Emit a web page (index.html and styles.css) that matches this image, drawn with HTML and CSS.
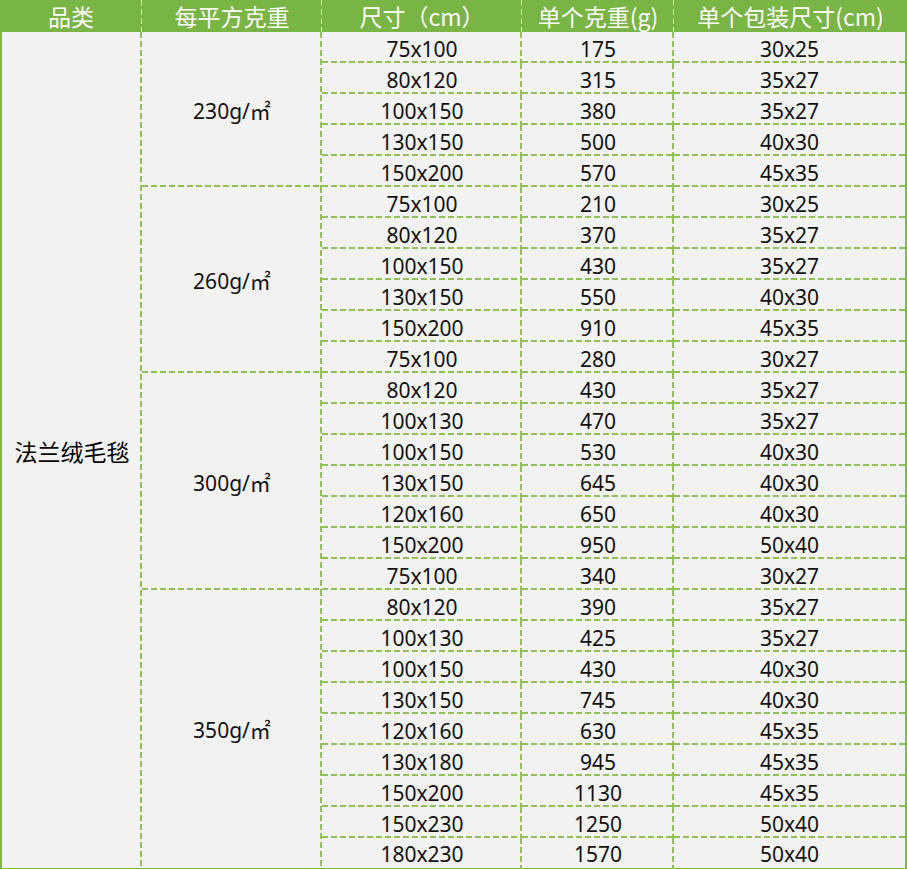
FILE: index.html
```html
<!DOCTYPE html>
<html lang="zh">
<head>
<meta charset="utf-8">
<title>法兰绒毛毯规格</title>
<link rel="stylesheet" href="styles.css">
</head>
<body>
<table class="spec">
<colgroup>
<col class="c1"><col class="c2"><col class="c3"><col class="c4"><col class="c5">
</colgroup>
<thead>
<tr><th>品类</th><th>每平方克重</th><th>尺寸（cm）</th><th>单个克重(g)</th><th class="last">单个包装尺寸(cm)</th></tr>
</thead>
<tbody>
<tr><td rowspan="27" class="cat">法兰绒毛毯</td><td rowspan="5" class="gsm">230g/㎡</td><td>75x100</td><td>175</td><td class="last">30x25</td></tr>
<tr><td>80x120</td><td>315</td><td class="last">35x27</td></tr>
<tr><td>100x150</td><td>380</td><td class="last">35x27</td></tr>
<tr><td>130x150</td><td>500</td><td class="last">40x30</td></tr>
<tr><td>150x200</td><td>570</td><td class="last">45x35</td></tr>
<tr><td rowspan="6" class="gsm">260g/㎡</td><td>75x100</td><td>210</td><td class="last">30x25</td></tr>
<tr><td>80x120</td><td>370</td><td class="last">35x27</td></tr>
<tr><td>100x150</td><td>430</td><td class="last">35x27</td></tr>
<tr><td>130x150</td><td>550</td><td class="last">40x30</td></tr>
<tr><td>150x200</td><td>910</td><td class="last">45x35</td></tr>
<tr><td>75x100</td><td>280</td><td class="last">30x27</td></tr>
<tr><td rowspan="7" class="gsm">300g/㎡</td><td>80x120</td><td>430</td><td class="last">35x27</td></tr>
<tr><td>100x130</td><td>470</td><td class="last">35x27</td></tr>
<tr><td>100x150</td><td>530</td><td class="last">40x30</td></tr>
<tr><td>130x150</td><td>645</td><td class="last">40x30</td></tr>
<tr><td>120x160</td><td>650</td><td class="last">40x30</td></tr>
<tr><td>150x200</td><td>950</td><td class="last">50x40</td></tr>
<tr><td>75x100</td><td>340</td><td class="last">30x27</td></tr>
<tr><td rowspan="9" class="gsm end">350g/㎡</td><td>80x120</td><td>390</td><td class="last">35x27</td></tr>
<tr><td>100x130</td><td>425</td><td class="last">35x27</td></tr>
<tr><td>100x150</td><td>430</td><td class="last">40x30</td></tr>
<tr><td>130x150</td><td>745</td><td class="last">40x30</td></tr>
<tr><td>120x160</td><td>630</td><td class="last">45x35</td></tr>
<tr><td>130x180</td><td>945</td><td class="last">45x35</td></tr>
<tr><td>150x200</td><td>1130</td><td class="last">45x35</td></tr>
<tr><td>150x230</td><td>1250</td><td class="last">50x40</td></tr>
<tr class="final"><td>180x230</td><td>1570</td><td class="last">50x40</td></tr>
</tbody>
</table>
</body>
</html>
```

FILE: styles.css
```css
html, body {
  margin: 0;
  padding: 0;
  background: #f2f2f2;
}
.spec {
  width: 907px;
  border-collapse: separate;
  border-spacing: 0;
  table-layout: fixed;
  font-family: "Noto Sans", "Noto Sans CJK SC", sans-serif;
  font-size: 21px;
  color: #111;
  background: #f2f2f2;
}
.c1 { width: 142px; }
.c2 { width: 180px; }
.c3 { width: 200px; }
.c4 { width: 152px; }
.c5 { width: 233px; }

.spec th {
  box-sizing: border-box;
  height: 32px;
  padding: 0;
  background-color: #79b545;
  background-image: repeating-linear-gradient(to bottom, #cfe6b6 0 6px, transparent 6px 9px);
  background-size: 1px 100%;
  background-position: right top;
  background-repeat: no-repeat;
  color: #ffffff;
  font-weight: normal;
  font-size: 23px;
  font-family: "Noto Sans CJK SC", sans-serif;
  text-align: center;
  line-height: 30px;
}
.spec th.last { background-image: none; }

.spec td {
  box-sizing: border-box;
  height: 31px;
  padding: 2px 0 0;
  text-align: center;
  line-height: 28px;
  background-image:
    repeating-linear-gradient(to right, #8fc156 0 6px, transparent 6px 9px),
    repeating-linear-gradient(to bottom, #8fc156 0 6px, transparent 6px 9px);
  background-size: 100% 2px, 2px 100%;
  background-position: left bottom, right top;
  background-repeat: no-repeat;
}
.spec td.last {
  background-image: repeating-linear-gradient(to right, #8fc156 0 6px, transparent 6px 9px);
  background-size: 100% 2px;
  background-position: left bottom;
  border-right: 2px solid #7cbd42;
}
.spec td.cat {
  border-left: 2px solid #7cbd42;
  border-bottom: 2px solid #7cbd42;
  background-image: repeating-linear-gradient(to bottom, #8fc156 0 6px, transparent 6px 9px);
  background-size: 2px 100%;
  background-position: right top;
  font-family: "Noto Sans CJK SC", sans-serif;
  font-size: 23px;
  color: #000;
}
.spec td.gsm {
  font-size: 21px;
}
.spec td.end {
  border-bottom: 2px solid #7cbd42;
  background-image: repeating-linear-gradient(to bottom, #8fc156 0 6px, transparent 6px 9px);
  background-size: 2px 100%;
  background-position: right top;
}
.spec tr.final td {
  border-bottom: 2px solid #7cbd42;
  background-image: repeating-linear-gradient(to bottom, #8fc156 0 6px, transparent 6px 9px);
  background-size: 2px 100%;
  background-position: right top;
}
.spec tr.final td.last { background-image: none; }
```
